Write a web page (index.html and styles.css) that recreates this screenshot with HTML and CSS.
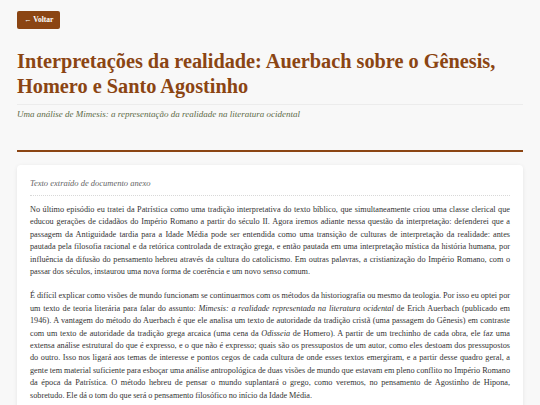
FILE: index.html
```html
<!DOCTYPE html>
<html lang="pt">
<head>
<meta charset="utf-8">
<title>Interpretações da realidade</title>
<link rel="stylesheet" href="styles.css">
</head>
<body>
<div class="page">
  <a class="back" href="#">← Voltar</a>
  <header class="head">
    <h1 class="title">Interpretações da realidade: Auerbach sobre o Gênesis, Homero e Santo Agostinho</h1>
    <p class="subtitle">Uma análise de Mimesis: a representação da realidade na literatura ocidental</p>
  </header>
  <article class="card">
    <div class="card-label">Texto extraído de documento anexo</div>
    <div class="card-body">
      <p>No último episódio eu tratei da Patrística como uma tradição interpretativa do texto bíblico, que simultaneamente criou uma classe clerical que educou gerações de cidadãos do Império Romano a partir do século II. Agora iremos adiante nessa questão da interpretação: defenderei que a passagem da Antiguidade tardia para a Idade Média pode ser entendida como uma transição de culturas de interpretação da realidade: antes pautada pela filosofia racional e da retórica controlada de extração grega, e então pautada em uma interpretação mística da história humana, por influência da difusão do pensamento hebreu através da cultura do catolicismo. Em outras palavras, a cristianização do Império Romano, com o passar dos séculos, instaurou uma nova forma de coerência e um novo senso comum.</p>
      <p class="tight">É difícil explicar como visões de mundo funcionam se continuarmos com os métodos da historiografia ou mesmo da teologia. Por isso eu optei por um texto de teoria literária para falar do assunto: <em>Mimesis: a realidade representada na literatura ocidental</em> de Erich Auerbach (publicado em 1946). A vantagem do método do Auerbach é que ele analisa um texto de autoridade da tradição cristã (uma passagem do Gênesis) em contraste com um texto de autoridade da tradição grega arcaica (uma cena da <em>Odisseia</em> de Homero). A partir de um trechinho de cada obra, ele faz uma extensa análise estrutural do que é expresso, e o que não é expresso; quais são os pressupostos de um autor, como eles destoam dos pressupostos do outro. Isso nos ligará aos temas de interesse e pontos cegos de cada cultura de onde esses textos emergiram, e a partir desse quadro geral, a gente tem material suficiente para esboçar uma análise antropológica de duas visões de mundo que estavam em pleno conflito no Império Romano da época da Patrística. O método hebreu de pensar o mundo suplantará o grego, como veremos, no pensamento de Agostinho de Hipona, sobretudo. Ele dá o tom do que será o pensamento filosófico no início da Idade Média.</p>
      <p>Diferente de nós, Auerbach não está tratando da cristianização do Império Romano, mas do conceito profundo de realismo na literatura. Sua tese é que a literatura ocidental nasce do encontro entre essas duas formas de representar a realidade.</p>
    </div>
  </article>
</div>
</body>
</html>
```

FILE: styles.css
```css
html, body {
  margin: 0;
  padding: 0;
  background: #f8f8f8;
}
.page {
  padding: 8px 17px 20px;
  font-family: "Liberation Serif", "Times New Roman", serif;
}
.back {
  display: inline-block;
  background: #8b4513;
  color: #fff;
  font-weight: bold;
  font-size: 7.5px;
  line-height: 10px;
  padding: 4px 7px;
  border-radius: 2px;
  text-decoration: none;
}
.head {
  border-bottom: 2px solid #8b4513;
  padding-bottom: 30px;
  margin-bottom: 13px;
}
.title {
  margin: 20px 0 0;
  font-size: 20.3px;
  line-height: 25px;
  font-weight: bold;
  color: #8b4513;
  padding-bottom: 5px;
  border-bottom: 1px solid #ececec;
}
.subtitle {
  margin: 3px 0 0;
  font-style: italic;
  font-size: 9px;
  line-height: 12px;
  color: #5d6b47;
}
.card {
  background: #fff;
  border-radius: 4px;
  box-shadow: 0 1px 4px rgba(0,0,0,0.08);
  padding: 12px 13px;
}
.card-label {
  font-style: italic;
  font-size: 8.5px;
  line-height: 12px;
  color: #666;
  padding-bottom: 6px;
  border-bottom: 1px dotted #d8d8d8;
  margin-bottom: 8px;
}
.card-body p {
  margin: 0 0 12px;
  font-size: 8.22px;
  line-height: 12.4px;
  color: #333;
  text-align: justify;
}
.card-body p.tight {
  word-spacing: -0.2px;
}
```
